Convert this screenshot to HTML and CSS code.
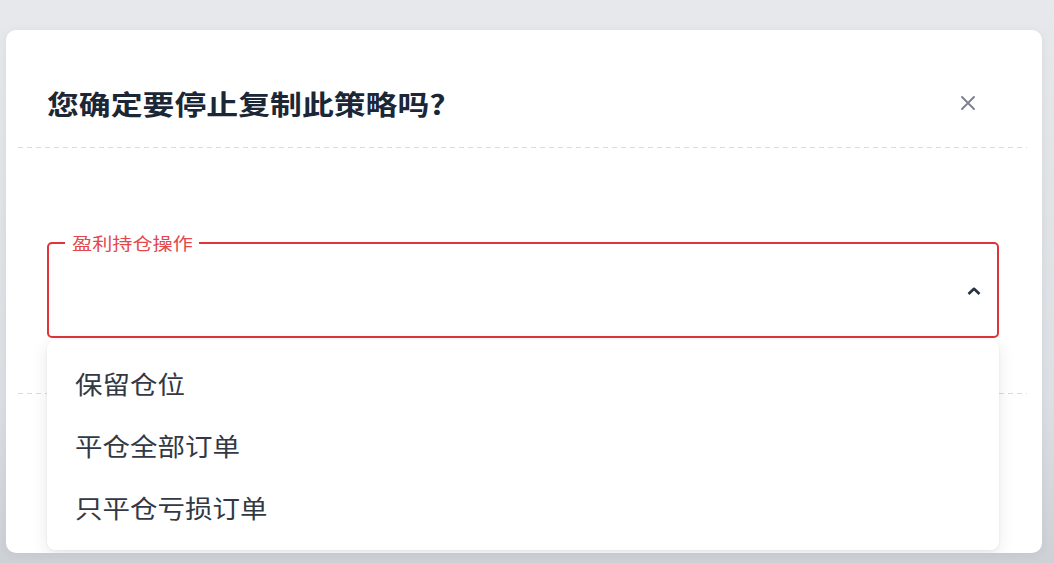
FILE: index.html
```html
<!DOCTYPE html>
<html lang="zh-CN">
<head>
  <meta charset="UTF-8" />
  <meta name="viewport" content="width=device-width, initial-scale=1.0" />
  <title>停止复制策略</title>
  <link rel="stylesheet" href="styles.css">
</head>
<body>

  <div class="modal">
    <div class="modal-header">
      <h2 class="modal-title"><span class="wide">您确定要停止复制此策略吗?</span></h2>
      <button class="btn-close" aria-label="关闭">
        <svg width="18" height="18" viewBox="0 0 18 18">
          <path d="M3 3 L15 15 M15 3 L3 15" stroke="#7d8590" stroke-width="2" stroke-linecap="round" fill="none"/>
        </svg>
      </button>
    </div>
    <div class="divider"></div>

    <div class="modal-body">
      <div class="field">
        <fieldset class="field-box">
          <legend><span class="wide">盈利持仓操作</span></legend>
        </fieldset>
        <span class="field-arrow">
          <svg width="16" height="10" viewBox="0 0 16 10">
            <path d="M2.5 8 L8 2.8 L13.5 8" stroke="#263241" stroke-width="2.6" fill="none" stroke-linejoin="round"/>
          </svg>
        </span>

        <ul class="menu">
          <li><span class="wide">保留仓位</span></li>
          <li><span class="wide">平仓全部订单</span></li>
          <li><span class="wide">只平仓亏损订单</span></li>
        </ul>
      </div>
    </div>

    <div class="divider"></div>
    <div class="modal-footer"></div>
  </div>

</body>
</html>
```

FILE: styles.css
```css
body {
  margin: 0;
  padding: 30px 0 10px 6px;
  font-family: "Noto Sans CJK SC", "Noto Sans", sans-serif;
  background: linear-gradient(#e6e8eb, #dcdfe3 70%, #cdd1d6);
  color: #333;
  height: 523px;
  overflow: hidden;
}

/* the screenshot text runs a bit wide, so stretch it */
.wide {
  display: inline-block;
  transform-origin: left center;
}

.modal {
  width: 1036px;
  height: 523px;
  background: #fff;
  border-radius: 10px;
  box-shadow: 0 2px 10px rgba(0,0,0,0.06);
  overflow: hidden;
}

.modal-header {
  display: flex;
  align-items: center;
  justify-content: space-between;
  padding: 58px 65px 27px 41px;
}

.modal-title {
  margin: 0;
  font-size: 27px;
  line-height: 32px;
  font-weight: 700;
  color: #1b2736;
}

.modal-title .wide {
  transform: scaleX(1.18);
}

.btn-close {
  background: none;
  border: none;
  padding: 0;
  width: 18px;
  height: 18px;
  margin-top: -3px;
  cursor: pointer;
}

.divider {
  height: 1px;
  margin: 0 15px 0 12px;
  background: repeating-linear-gradient(to right, #d8dce1 0 5px, transparent 5px 9px);
}

.modal-body {
  padding: 88px 43px 55px 41px;
}

.field {
  position: relative;
}

.field-box {
  margin: 0;
  height: 102px;
  box-sizing: border-box;
  padding: 0 16px;
  border: 2px solid #e0333a;
  border-radius: 5px;
}

.field-box legend {
  padding: 0 28px 0 7px;
  font-size: 16.5px;
  line-height: 14px;
  color: #e4474a;
}

.field-box legend .wide {
  transform: scaleX(1.22);
}

.field-arrow {
  position: absolute;
  right: 17px;
  top: 50px;
  display: flex;
}

.menu {
  position: absolute;
  left: 0;
  right: 0;
  top: 104px;
  margin: 0;
  padding: 12px 0;
  list-style: none;
  background: #fff;
  border-radius: 8px;
  box-shadow: 0 4px 16px rgba(30,40,60,0.10), 0 1px 3px rgba(30,40,60,0.06);
  z-index: 2;
}

.menu li {
  height: 62px;
  line-height: 62px;
  padding-left: 28px;
  font-size: 25px;
  color: #323944;
}

.menu li .wide {
  transform: scaleX(1.1);
}

.modal-footer {
  height: 160px;
}
```
